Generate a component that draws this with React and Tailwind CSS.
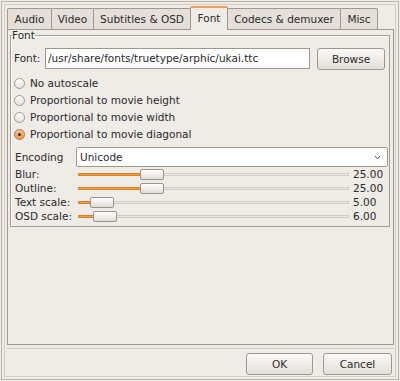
import React from "react";

const tabs = [
  { label: "Audio", w: "w-[45px]" },
  { label: "Video", w: "w-[43px]" },
  { label: "Subtitles & OSD", w: "w-[98px]" },
  { label: "Font", w: "w-[38px]", active: true },
  { label: "Codecs & demuxer", w: "w-[114px]" },
  { label: "Misc", w: "w-[38px]" },
];

const radios = [
  { label: "No autoscale" },
  { label: "Proportional to movie height" },
  { label: "Proportional to movie width" },
  { label: "Proportional to movie diagonal", checked: true },
];

const sliders = [
  { label: "Blur:", value: 25 },
  { label: "Outline:", value: 25 },
  { label: "Text scale:", value: 5 },
  { label: "OSD scale:", value: 6 },
];

function Tab({ label, w, active }) {
  if (active) {
    return (
      <div
        className={`${w} -ml-px relative z-10 h-[24px] -mb-px flex items-center justify-center rounded-t-[2px] border-x border-t-2 border-x-[#a1988d] border-t-[#f0a050] bg-[#efebe7] pb-[2px]`}
      >
        {label}
      </div>
    );
  }
  return (
    <div
      className={`${w} -ml-px first:ml-0 h-[21px] flex items-center justify-center rounded-t-[2px] border border-b-0 border-[#a1988d] bg-[#e4dfd8]`}
    >
      {label}
    </div>
  );
}

function Button({ children, w }) {
  return (
    <div
      className={`${w} h-[22px] flex items-center justify-center rounded-[3px] border border-[#a1988d] bg-gradient-to-b from-[#fbfaf8] to-[#e3ded8]`}
    >
      {children}
    </div>
  );
}

function Radio({ label, checked }) {
  return (
    <div className="h-[17px] flex items-center pl-[3px]">
      {checked ? (
        <div className="w-[11px] h-[11px] rounded-full border border-[#b8773a] bg-gradient-to-b from-[#f9c088] to-[#f09a48] flex items-center justify-center">
          <div className="w-[3px] h-[3px] rounded-full bg-[#2a1c10]" />
        </div>
      ) : (
        <div className="w-[11px] h-[11px] rounded-full border border-[#a1988d] bg-gradient-to-b from-white to-[#e6e1db]" />
      )}
      <span className="ml-[5px]">{label}</span>
    </div>
  );
}

function Slider({ label, value }) {
  return (
    <div className="h-[14px] flex items-center pl-[4px]">
      <span className="w-[63px] shrink-0">{label}</span>
      <div className="w-[271px] flex items-center">
        <div
          className="h-[3px] bg-[#f39c3c] border-y border-[#d9802a]"
          style={{ width: Math.round(value * 2.47) }}
        />
        <div className="w-[24px] h-[11px] shrink-0 rounded-[2px] border border-[#9d948a] bg-gradient-to-b from-white to-[#e2ddd7]" />
        <div className="flex-1 h-[3px] bg-[#ebe7e2] border-y border-[#d3ccc4] border-r" />
      </div>
      <span className="ml-[4px]">{value.toFixed(2)}</span>
    </div>
  );
}

export default function App() {
  return (
    <div className="w-[400px] h-[381px] bg-[#efebe7] p-px font-['DejaVu_Sans',sans-serif] text-[10.5px] leading-none text-[#2a2a2a]">
      <div className="h-full border border-[#bdb4a9] p-[2px]">
        <div className="h-full border border-[#d5cec6] pl-[2px] pr-px pt-px flex flex-col">
          {/* Tabs */}
          <div className="h-[23px] flex items-end">
            {tabs.map((t) => (
              <Tab key={t.label} {...t} />
            ))}
          </div>

          {/* Page */}
          <div className="h-[316px] border border-[#a1988d] bg-[#efebe7] pl-[2px] pr-[3px]">
            <fieldset className="border border-[#a69d92] shadow-[inset_1px_1px_0_#ffffff] pb-[3px]">
              <legend className="ml-px leading-[10px] h-[10px]">Font</legend>

              <div className="mt-[8px] h-[22px] flex items-start pl-[3px] pr-[4px]">
                <span className="w-[31px] shrink-0 h-[21px] flex items-center">Font:</span>
                <div className="w-[265px] h-[21px] flex items-center border border-[#a1988d] bg-white pl-[2px]">
                  /usr/share/fonts/truetype/arphic/ukai.ttc
                </div>
                <div className="ml-auto">
                  <Button w="w-[68px]">Browse</Button>
                </div>
              </div>

              <div className="mt-[5px]">
                {radios.map((r) => (
                  <Radio key={r.label} {...r} />
                ))}
              </div>

              <div className="mt-[4px] h-[20px] flex items-center pl-[4px] pr-px">
                <span className="w-[61px] shrink-0">Encoding</span>
                <div className="flex-1 h-[20px] flex items-center rounded-[2px] border border-[#a1988d] bg-white pl-[3px] pr-[6px]">
                  <span>Unicode</span>
                  <svg className="ml-auto" width="7" height="5" viewBox="0 0 7 5">
                    <path d="M1 1 L3.5 4 L6 1" stroke="#555" strokeWidth="1" fill="none" />
                  </svg>
                </div>
              </div>

              <div>
                {sliders.map((s) => (
                  <Slider key={s.label} {...s} />
                ))}
              </div>
            </fieldset>
          </div>

          {/* Separator + buttons */}
          <div className="mt-[3px] h-px bg-[#d2cbc3]" />
          <div className="mt-[4px] flex justify-end gap-[10px] pr-[2px]">
            <Button w="w-[67px]">OK</Button>
            <Button w="w-[69px]">Cancel</Button>
          </div>
        </div>
      </div>
    </div>
  );
}
